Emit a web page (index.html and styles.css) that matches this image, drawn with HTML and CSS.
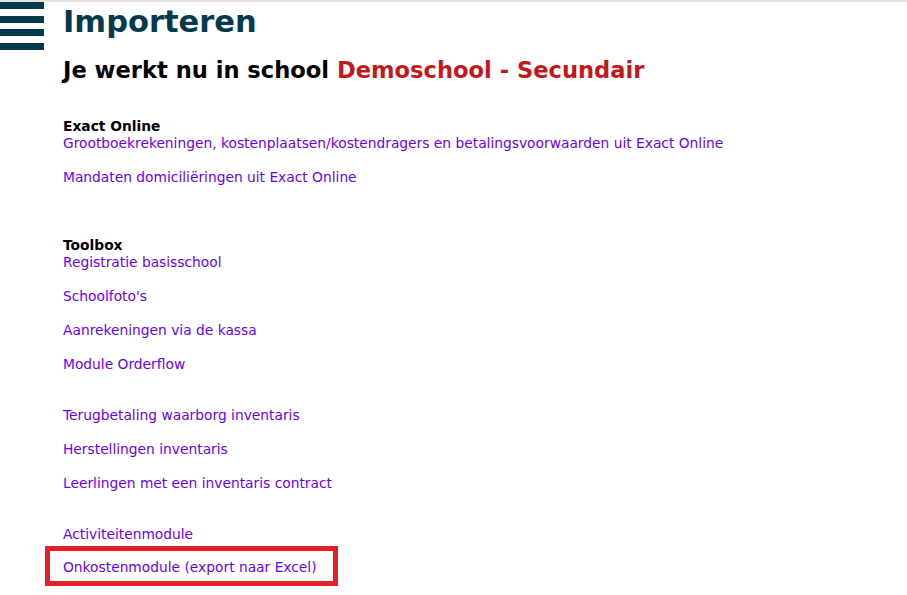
FILE: index.html
```html
<!DOCTYPE html>
<html lang="nl">
<head>
<meta charset="utf-8">
<title>Importeren</title>
<link rel="stylesheet" href="styles.css">
</head>
<body>
<div class="page">
  <nav class="menu" aria-label="Menu">
    <span class="bar"></span>
    <span class="bar"></span>
    <span class="bar"></span>
    <span class="bar"></span>
  </nav>
  <main class="main">
    <h1 class="title">Importeren</h1>
    <h2 class="school">Je werkt nu in school <span class="school-name">Demoschool - Secundair</span></h2>

    <section class="group group-exact">
      <div class="group-title">Exact Online</div>
      <a class="link" href="#">Grootboekrekeningen, kostenplaatsen/kostendragers en betalingsvoorwaarden uit Exact Online</a>
      <a class="link spaced" href="#">Mandaten domiciliëringen uit Exact Online</a>
    </section>

    <section class="group group-toolbox">
      <div class="group-title">Toolbox</div>
      <a class="link" href="#">Registratie basisschool</a>
      <a class="link spaced" href="#">Schoolfoto's</a>
      <a class="link spaced" href="#">Aanrekeningen via de kassa</a>
      <a class="link spaced" href="#">Module Orderflow</a>
      <a class="link gap" href="#">Terugbetaling waarborg inventaris</a>
      <a class="link spaced" href="#">Herstellingen inventaris</a>
      <a class="link spaced" href="#">Leerlingen met een inventaris contract</a>
      <a class="link gap" href="#">Activiteitenmodule</a>
      <div class="highlight">
        <a class="link" href="#">Onkostenmodule (export naar Excel)</a>
      </div>
    </section>
  </main>
</div>
</body>
</html>
```
FILE: styles.css
```css
html, body {
  margin: 0;
  padding: 0;
  background: #ffffff;
}

body {
  border-top: 2px solid #e2e2e2;
  font-family: "DejaVu Sans", Verdana, sans-serif;
  color: #000;
}

.page {
  display: flex;
  align-items: flex-start;
}

.menu {
  width: 44px;
  display: flex;
  flex-direction: column;
  gap: 6.5px;
  flex-shrink: 0;
}

.bar {
  display: block;
  height: 7px;
  background: #003a4d;
}

.main {
  margin-left: 19px;
  display: flex;
  flex-direction: column;
  align-items: flex-start;
}

.title {
  margin: 0;
  font-size: 30.5px;
  line-height: 40px;
  font-weight: bold;
  color: #033a4d;
}

.school {
  margin: 14px 0 0;
  font-size: 22.6px;
  line-height: 28px;
  font-weight: bold;
  color: #000;
}

.school-name {
  color: #c2181b;
}

.group {
  display: flex;
  flex-direction: column;
  align-items: flex-start;
  font-size: 13.8px;
  line-height: 17px;
}

.group-exact {
  margin-top: 34px;
}

.group-toolbox {
  margin-top: 51px;
}

.group-title {
  font-weight: bold;
  color: #000;
}

.link {
  color: #6a00f2;
  text-decoration: none;
}

.spaced {
  margin-top: 17px;
}

.gap {
  margin-top: 34px;
}

.highlight {
  margin: 3px 0 0 -18px;
  padding: 8px 16px 5px 13px;
  border: 5px solid #e41f28;
}
```
